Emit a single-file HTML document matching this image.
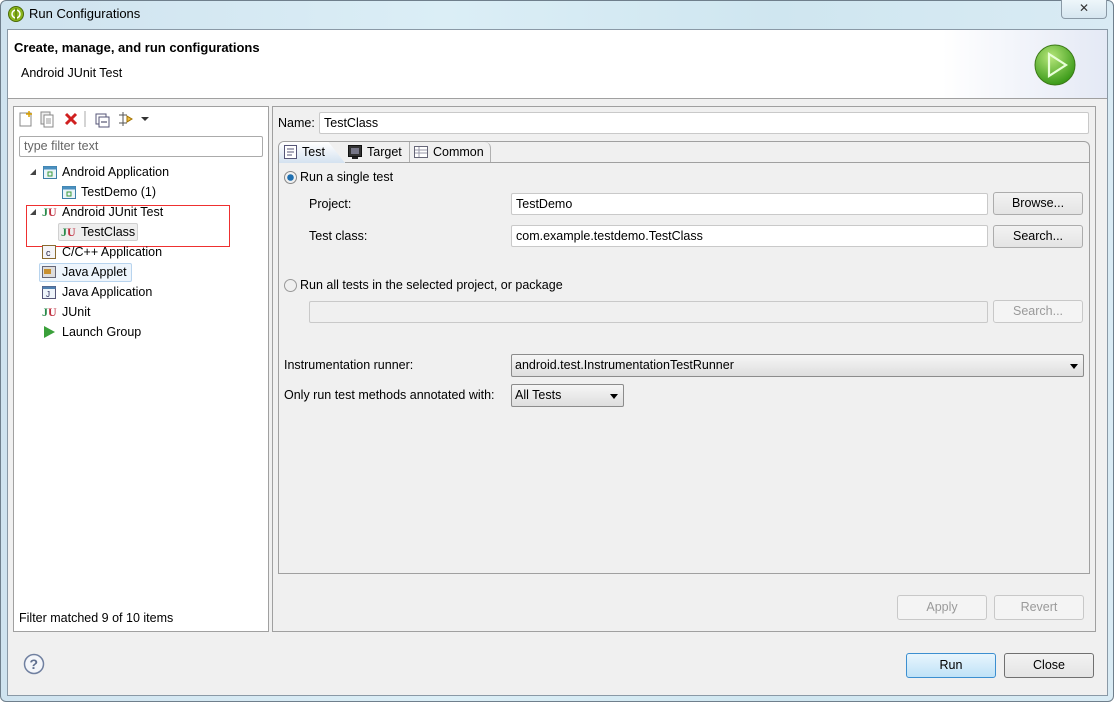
<!DOCTYPE html>
<html><head><meta charset="utf-8"><style>
*{box-sizing:border-box;margin:0;padding:0}
body{width:1114px;height:702px;overflow:hidden;background:#fff;font-family:"Liberation Sans",sans-serif;font-size:12.5px;color:#000;position:relative}
.a{position:absolute}
.frame{left:0;top:0;width:1114px;height:702px;background:linear-gradient(90deg,#cfe3ef,#dbeef6 40%,#cfe6f0 70%,#d9ebf4);border:1px solid #6f7f8c;border-radius:6px}
.client{left:7px;top:29px;width:1101px;height:667px;background:#f0f0f0;border:1px solid #8a99a6}
.hdr{left:8px;top:30px;width:1099px;height:69px;background:linear-gradient(90deg,#fff 85%,#e4e9f5);border-bottom:1px solid #a0a0a0}
.inp{background:#fff;border:1px solid #c9c9c9;border-radius:2px;padding:0 4px;line-height:20px;height:22px}
.btn{border:1px solid #acacac;border-radius:3px;background:linear-gradient(#f2f2f2,#e4e4e4);text-align:center;line-height:21px;height:23px}
.dis{color:#9a9a9a;background:#f4f4f4;border-color:#c8c8c8}
.combo{border:1px solid #8c8c8c;border-radius:2px;background:linear-gradient(#f6f6f6,#dedede);height:23px;line-height:21px;padding-left:3px}
.tri{position:absolute;right:5px;top:9px;width:0;height:0;border-left:4px solid transparent;border-right:4px solid transparent;border-top:5px solid #000}
.ti{position:absolute;font-size:12.5px;line-height:16px}
.ic{position:absolute;width:14px;height:14px}
</style></head><body>
<div class="a frame"></div>
<svg class="a" style="left:8px;top:6px" width="16" height="16"><circle cx="8" cy="8" r="7.5" fill="#8ab51c" stroke="#4a6a08"/><circle cx="8" cy="8" r="4" fill="none" stroke="#fff" stroke-width="1.5"/><rect x="7" y="2" width="2" height="12" fill="#6a9010"/></svg>
<div class="a" style="left:29px;top:6px;font-size:13px">Run Configurations</div>
<div class="a" style="left:1061px;top:0;width:46px;height:19px;border:1px solid #8a99a6;border-top:none;border-radius:0 0 4px 4px;background:linear-gradient(#eef6fa,#d6e6f0);text-align:center;font-size:12px;line-height:17px;color:#333">✕</div>
<div class="a client"></div>
<div class="a hdr"></div>
<div class="a" style="left:14px;top:40px;font-weight:bold;font-size:13px">Create, manage, and run configurations</div>
<div class="a" style="left:21px;top:66px">Android JUnit Test</div>
<svg class="a" style="left:1034px;top:44px" width="44" height="44"><defs><radialGradient id="g" cx="40%" cy="30%" r="70%"><stop offset="0" stop-color="#b6e67a"/><stop offset="1" stop-color="#3a9a18"/></radialGradient></defs><circle cx="21" cy="21" r="20" fill="url(#g)" stroke="#3c7a18"/><path d="M15 10 L32 21 L15 32 Z" fill="none" stroke="#e8ffd8" stroke-width="2.2"/></svg>
<!-- left panel -->
<div class="a" style="left:13px;top:106px;width:256px;height:526px;background:#fff;border:1px solid #a0a0a0"></div>
<svg class="a" style="left:19px;top:110px" width="140" height="18">
<rect x="1" y="3" width="11" height="13" fill="#fff" stroke="#888"/><path d="M10 1v6M7 4h6" stroke="#d9a000" stroke-width="1.5"/>
<rect x="22" y="2" width="9" height="12" fill="#eee" stroke="#888"/><rect x="25" y="5" width="9" height="12" fill="#fff" stroke="#888"/><path d="M27 9h5M27 11h5M27 13h5" stroke="#999"/>
<path d="M47 4l10 10M57 4l-10 10" stroke="#d02020" stroke-width="3"/>
<line x1="66" y1="1" x2="66" y2="17" stroke="#aaa"/>
<rect x="77" y="4" width="10" height="10" fill="#fff" stroke="#557"/><rect x="80" y="7" width="10" height="10" fill="#fff" stroke="#557"/><path d="M82 12h6" stroke="#335"/>
<path d="M100 5h8M100 13h8M104 2v14" stroke="#555"/><path d="M108 6l5 3-5 3z" fill="#f0c040" stroke="#a07000"/>
<path d="M122 7h8l-4 4z" fill="#333"/>
</svg>
<div class="a inp" style="left:19px;top:136px;width:244px;height:21px;line-height:19px;color:#666;border-color:#ababab">type filter text</div>
<div class="a" style="left:30px;top:169px;width:0;height:0;border-left:6px solid transparent;border-bottom:6px solid #444"></div>
<div class="a" style="left:30px;top:209px;width:0;height:0;border-left:6px solid transparent;border-bottom:6px solid #444"></div>
<svg class="ic" style="left:43px;top:165px"><rect x="0.5" y="1.5" width="13" height="12" fill="#eaf4fa" stroke="#3c7fa8"/><rect x="0.5" y="1.5" width="13" height="3" fill="#4a90c0"/><path d="M5 7h4v4H5z" fill="none" stroke="#3a9a3a"/></svg>
<div class="ti" style="left:62px;top:164px">Android Application</div>
<svg class="ic" style="left:62px;top:185px"><rect x="0.5" y="1.5" width="13" height="12" fill="#eaf4fa" stroke="#3c7fa8"/><rect x="0.5" y="1.5" width="13" height="3" fill="#4a90c0"/><path d="M5 7h4v4H5z" fill="none" stroke="#3a9a3a"/></svg>
<div class="ti" style="left:81px;top:184px">TestDemo (1)</div>
<div class="a" style="left:42px;top:205px;font:bold 12px 'Liberation Serif',serif"><span style="color:#2a8a4a">J</span><span style="color:#c03040">U</span></div>
<div class="ti" style="left:62px;top:204px">Android JUnit Test</div>
<div class="a" style="left:58px;top:223px;width:80px;height:18px;background:#eee;border:1px solid #d0d0d0;border-radius:2px"></div>
<div class="a" style="left:61px;top:225px;font:bold 12px 'Liberation Serif',serif"><span style="color:#2a8a4a">J</span><span style="color:#c03040">U</span></div>
<div class="ti" style="left:81px;top:224px">TestClass</div>
<div class="a" style="left:26px;top:205px;width:204px;height:42px;border:1px solid #ee3030"></div>
<svg class="ic" style="left:42px;top:245px"><rect x="0.5" y="0.5" width="13" height="13" fill="#f4f4f8" stroke="#8a6a30"/><text x="4" y="11" font-size="9" fill="#224" font-family="Liberation Sans">c</text></svg>
<div class="ti" style="left:62px;top:244px">C/C++ Application</div>
<div class="a" style="left:39px;top:263px;width:93px;height:19px;background:#eef5fc;border:1px solid #b8d4ee;border-radius:2px"></div>
<svg class="ic" style="left:42px;top:265px"><rect x="0.5" y="1.5" width="13" height="11" fill="#ddd" stroke="#667"/><rect x="2" y="4" width="7" height="5" fill="#c89030"/></svg>
<div class="ti" style="left:62px;top:264px">Java Applet</div>
<svg class="ic" style="left:42px;top:285px"><rect x="0.5" y="1.5" width="13" height="12" fill="#eef4fa" stroke="#557"/><rect x="0.5" y="1.5" width="13" height="2.5" fill="#5080b0"/><text x="4" y="12" font-size="8" fill="#225" font-family="Liberation Sans">J</text></svg>
<div class="ti" style="left:62px;top:284px">Java Application</div>
<div class="a" style="left:42px;top:305px;font:bold 12px 'Liberation Serif',serif"><span style="color:#2a8a4a">J</span><span style="color:#c03040">U</span></div>
<div class="ti" style="left:62px;top:304px">JUnit</div>
<svg class="ic" style="left:43px;top:325px"><path d="M1 1L12 7L1 13Z" fill="#3aa03a"/></svg>
<div class="ti" style="left:62px;top:324px">Launch Group</div>
<div class="ti" style="left:19px;top:610px">Filter matched 9 of 10 items</div>
<!-- right panel -->
<div class="a" style="left:272px;top:106px;width:824px;height:526px;border:1px solid #a0a0a0"></div>
<div class="a" style="left:278px;top:116px">Name:</div>
<div class="a inp" style="left:319px;top:112px;width:770px">TestClass</div>
<!-- tabs -->
<div class="a" style="left:278px;top:162px;width:812px;height:412px;border:1px solid #a0a0a0;border-top:none"></div>
<div class="a" style="left:278px;top:141px;width:812px;height:22px;border:1px solid #a0a0a0;border-bottom:none;border-radius:6px 6px 0 0"></div>
<div class="a" style="left:279px;top:142px;width:66px;height:21px;background:linear-gradient(#fff,#d4e2f0);border-radius:5px 0 0 0;clip-path:polygon(0 0,75% 0,100% 100%,0 100%)"></div>
<svg class="ic" style="left:284px;top:145px"><rect x="0.5" y="0.5" width="12" height="13" fill="#fff" stroke="#557"/><path d="M3 4h7M3 7h7M3 10h5" stroke="#557"/></svg>
<div class="a" style="left:302px;top:145px">Test</div>
<svg class="ic" style="left:348px;top:145px"><rect x="0.5" y="0.5" width="13" height="11" fill="#333" stroke="#111"/><rect x="3" y="3" width="8" height="6" fill="#778"/><rect x="4" y="12" width="6" height="2" fill="#222"/></svg>
<div class="a" style="left:367px;top:145px">Target</div>
<div class="a" style="left:409px;top:142px;width:82px;height:21px;border-left:1px solid #b0b0b0;border-right:1px solid #b0b0b0;border-radius:0 6px 0 0"></div>
<svg class="ic" style="left:414px;top:145px"><rect x="0.5" y="1.5" width="13" height="11" fill="#fff" stroke="#667"/><path d="M1 5h12M1 8h12M5 2v10" stroke="#99a"/></svg>
<div class="a" style="left:433px;top:145px">Common</div>
<div class="a" style="left:279px;top:162px;width:810px;height:1px;background:#a0a0a0;clip-path:inset(0 0 0 66px)"></div>
<!-- radios -->
<svg class="a" style="left:284px;top:171px" width="13" height="13"><circle cx="6.5" cy="6.5" r="6" fill="#f0f0f0" stroke="#888"/><circle cx="6.5" cy="6.5" r="3.3" fill="#1e6fb0"/></svg>
<div class="a" style="left:300px;top:170px">Run a single test</div>
<div class="a" style="left:309px;top:197px">Project:</div>
<div class="a inp" style="left:511px;top:193px;width:477px">TestDemo</div>
<div class="a btn" style="left:993px;top:192px;width:90px">Browse...</div>
<div class="a" style="left:309px;top:229px">Test class:</div>
<div class="a inp" style="left:511px;top:225px;width:477px">com.example.testdemo.TestClass</div>
<div class="a btn" style="left:993px;top:225px;width:90px">Search...</div>
<svg class="a" style="left:284px;top:279px" width="13" height="13"><circle cx="6.5" cy="6.5" r="6" fill="#f0f0f0" stroke="#999"/></svg>
<div class="a" style="left:300px;top:278px">Run all tests in the selected project, or package</div>
<div class="a inp" style="left:309px;top:301px;width:679px;background:#f0f0f0"></div>
<div class="a btn dis" style="left:993px;top:300px;width:90px">Search...</div>
<div class="a" style="left:284px;top:358px">Instrumentation runner:</div>
<div class="a combo" style="left:511px;top:354px;width:573px">android.test.InstrumentationTestRunner<div class="tri"></div></div>
<div class="a" style="left:284px;top:388px">Only run test methods annotated with:</div>
<div class="a combo" style="left:511px;top:384px;width:113px">All Tests<div class="tri"></div></div>
<div class="a btn dis" style="left:897px;top:595px;width:90px;height:25px;line-height:23px">Apply</div>
<div class="a btn dis" style="left:994px;top:595px;width:90px;height:25px;line-height:23px">Revert</div>
<!-- bottom -->
<svg class="a" style="left:23px;top:653px" width="22" height="22"><circle cx="11" cy="11" r="9.5" fill="#f4f6fa" stroke="#7080a0" stroke-width="1.5"/><text x="6.5" y="16" font-size="14" font-weight="bold" fill="#607090" font-family="Liberation Sans">?</text></svg>
<div class="a btn" style="left:906px;top:653px;width:90px;height:25px;line-height:23px;border-color:#3c8fd0;background:linear-gradient(#e8f5fd,#bfe2f7)">Run</div>
<div class="a btn" style="left:1004px;top:653px;width:90px;height:25px;line-height:23px;border-color:#707070">Close</div>
</body></html>
